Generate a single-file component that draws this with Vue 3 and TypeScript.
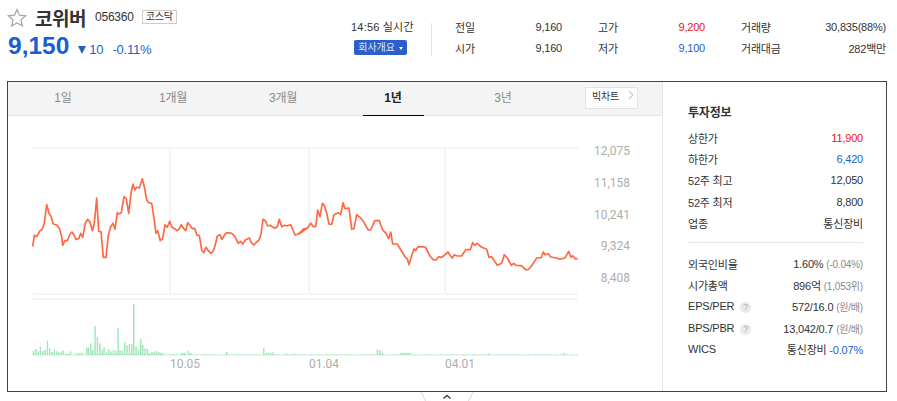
<template>
  <div class="page">
    <header class="summary">
      <div class="title-block">
        <div class="name-row">
          <svg class="star" width="20" height="19" viewBox="0 0 20 19">
            <path d="M10 1.5l2.5 5.6 6 .7-4.5 4.1 1.3 6L10 14.9 4.700 17.900l1.300-6L1.500 7.800l6-.7z" fill="#fff" stroke="#a9a9a9" stroke-width="1.300" />
          </svg>
          <strong class="name">코위버</strong>
          <span class="code">056360</span>
          <span class="market">코스닥</span>
        </div>
        <div class="price-row">
          <span class="price">9,150</span>
          <i class="down"></i>
          <span class="delta">10</span>
          <span class="rate">-0.11%</span>
        </div>
      </div>
      <div class="clock">
        <span class="time">14:56 실시간</span>
        <button class="company">회사개요 <i></i></button>
      </div>
      <div class="quote">
        <template v-for="q in quotes" :key="q.label">
          <div class="quote-cell">
            <span>{{ q.label }}</span>
            <span class="num" :class="q.tone">{{ q.value }}</span>
          </div>
        </template>
      </div>
    </header>

    <section class="frame">
      <div class="main">
        <nav class="tabs">
          <a v-for="t in tabs" :key="t" class="tab" :class="{ active: t === '1년' }">{{ t }}</a>
          <a class="big-chart">빅차트 <svg width="6" height="10" viewBox="0 0 6 10"><path d="M1 1l4 4-4 4" fill="none" stroke="#ccc" stroke-width="1.200" /></svg></a>
        </nav>
        <svg class="chart" width="654" height="275" viewBox="8 116 654 275">
          <g fill="none" stroke="#f5f5f5" stroke-width="2">
            <path d="M33 148H578M33 294H578M33 299H578" />
            <path d="M170 148V294M309 148V294M445 148V294" />
          </g>
          <path d="M32 355.500H578" stroke="#eef3f0" stroke-width="1" />
          <rect v-for="(b, i) in bars" :key="i" :x="b.x" :y="355 - b.h" width="1.500" :height="b.h" fill="#a5e6bd" />
          <polyline :points="line" fill="none" stroke="#ff6a45" stroke-width="1.700" stroke-linejoin="round" />
          <g class="axis" text-anchor="end">
            <text v-for="a in yLabels" :key="a.t" x="630" :y="a.y">{{ a.t }}</text>
          </g>
          <g class="axis" text-anchor="middle">
            <text x="185" y="368">10.05</text>
            <text x="324" y="368">01.04</text>
            <text x="460" y="368">04.01</text>
          </g>
        </svg>
      </div>
      <aside class="side">
        <h3>투자정보</h3>
        <dl>
          <div v-for="r in infoTop" :key="r.label" class="row">
            <dt>{{ r.label }}</dt>
            <dd :class="r.tone">{{ r.value }}</dd>
          </div>
        </dl>
        <hr />
        <dl>
          <div class="row"><dt>외국인비율</dt><dd>1.60% <small>(-0.04%)</small></dd></div>
          <div class="row"><dt>시가총액</dt><dd>896억 <small>(1,053위)</small></dd></div>
          <div class="row"><dt>EPS/PER <i class="help">?</i></dt><dd>572/16.0 <small>(원/배)</small></dd></div>
          <div class="row"><dt>BPS/PBR <i class="help">?</i></dt><dd>13,042/0.7 <small>(원/배)</small></dd></div>
          <div class="row"><dt>WICS</dt><dd>통신장비 <span class="blue">-0.07%</span></dd></div>
        </dl>
      </aside>
    </section>

    <svg class="fold" width="54" height="10" viewBox="0 0 54 10">
      <path d="M1 0l5 10M53 0l-5 10" stroke="#d4d4d4" fill="none" />
      <path d="M23.500 6.500L27 3.500l3.500 3" stroke="#444" stroke-width="1.600" fill="none" />
    </svg>
  </div>
</template>

<script setup lang="ts">
const tabs = ['1일', '1개월', '3개월', '1년', '3년']

const quotes = [
  { label: '전일', value: '9,160', tone: '' },
  { label: '고가', value: '9,200', tone: 'red' },
  { label: '거래량', value: '30,835(88%)', tone: '' },
  { label: '시가', value: '9,160', tone: '' },
  { label: '저가', value: '9,100', tone: 'blue' },
  { label: '거래대금', value: '282백만', tone: '' }
]

const infoTop = [
  { label: '상한가', value: '11,900', tone: 'red' },
  { label: '하한가', value: '6,420', tone: 'blue' },
  { label: '52주 최고', value: '12,050', tone: '' },
  { label: '52주 최저', value: '8,800', tone: '' },
  { label: '업종', value: '통신장비', tone: '' }
]

const yLabels = [
  { t: '12,075', y: 155 },
  { t: '11,158', y: 187 },
  { t: '10,241', y: 219 },
  { t: '9,324', y: 250 },
  { t: '8,408', y: 282 }
]

// traced from the reference, in 3x crop pixels
const left = [68,350,73,316,80,320,90,302,97,298,103,280,110,224,118,252,123,258,130,282,140,285,148,295,155,320,158,346,165,332,172,332,180,312,186,306,192,315,198,328,206,326,212,310,218,322,226,280,233,268,240,276,247,302,253,280,260,204,266,304,273,305,280,382,288,382,295,316,302,290,309,280,315,298,322,248,328,252,334,248,342,200,349,206,356,250,363,190,369,162,374,180,380,172,388,174,397,146,403,170,410,210,416,218,425,220,432,265,438,310,443,302,451,332,458,326,465,284,472,292,479,274,486,292,494,296,500,302,507,298,514,284,521,296,527,302,533,278,540,286,547,296,554,295,561,316,568,316,575,360,581,368,588,352,595,362,602,370,608,366,615,348,622,318,630,314,636,328,644,314,650,308,665,310,672,316,679,328,685,340,692,334,698,342,706,330,718,324,724,338,732,345,740,336,747,330,753,312,759,268,766,272,773,288,780,286,787,290,795,295,802,290,808,268,815,290,823,286,830,288,836,286,842,284,849,300,855,315,865,312,872,306,880,297,892,294]
const right = [0,310,10,298,22,295,32,280,40,290,47,290,53,240,60,260,67,220,73,226,80,250,87,282,95,283,102,254,115,248,122,254,129,218,135,236,147,234,155,298,162,296,170,254,180,262,190,274,205,300,212,300,224,272,238,272,247,298,258,310,266,326,272,306,278,342,292,342,305,364,316,382,322,386,327,404,334,380,342,356,347,362,354,350,376,351,390,378,400,389,408,390,416,380,425,382,437,372,444,366,450,376,457,384,463,374,472,378,485,378,497,359,511,359,518,338,524,346,532,340,545,352,560,358,567,382,575,380,592,406,605,400,613,374,622,384,634,406,641,400,648,406,664,407,678,420,686,418,696,406,710,384,724,383,730,366,735,374,745,371,752,381,770,384,780,388,795,384,806,364,813,382,818,377,826,387,833,386]

const toPoints = (src: number[], ox: number): string[] => {
  const out: string[] = []
  for (let i = 0; i < src.length; i += 2) {
    out.push(`${(ox + src[i] / 3).toFixed(1)},${(130 + src[i + 1] / 3).toFixed(1)}`)
  }
  return out
}
const line = [...toPoints(left, 10), ...toPoints(right, 300)].join(' ')

// volume: [crop x, crop y of the bar top] for the taller bars
const tall: [number, number][] = [[68,182],[75,177],[82,182],[89,170],[96,183],[103,180],[110,152],[117,175],[124,186],[131,178],[138,184],[145,186],[152,185],[158,181],[165,192],[172,191],[179,184],[200,190],[207,190],[214,188],[228,173],[233,172],[240,160],[246,180],[253,108],[260,140],[267,160],[274,180],[280,172],[287,186],[294,178],[301,184],[308,180],[315,182],[322,113],[328,180],[335,182],[342,156],[349,165],[356,162],[363,162],[369,42],[376,170],[383,178],[390,146],[396,165],[403,175],[410,177],[417,190],[424,186],[431,184],[438,184],[445,186],[452,188],[515,188],[522,188],[533,182],[540,189],[648,186],[759,174],[766,189],[773,188],[780,188],[787,187],[827,190],[850,190],[1100,178],[1107,180],[1114,188],[1170,189],[1177,188],[1184,188],[1191,188],[1198,189],[1435,190],[1660,189]]
const bars: { x: number; h: number }[] = []
for (let x = 33; x < 578; x += 2.3) {
  const seed = Math.round(x * 7) % 5
  bars.push({ x, h: seed === 0 ? 0.5 : x < 190 ? 1.2 : 0.8 })
}
for (const [cx, top] of tall) {
  bars.push({ x: 10 + cx / 3, h: (195 - top) / 3 })
}
</script>

<style>
html, body {
  margin: 0;
  background: #fff;
  overflow: hidden;
}
</style>

<style scoped>
.page {
  position: relative;
  width: 897px;
  height: 401px;
  font-family: "Liberation Sans", "Noto Sans CJK KR", sans-serif;
  font-size: 11px;
  letter-spacing: -0.2px;
  color: #333;
}

.summary {
  display: flex;
  height: 81px;
  box-sizing: border-box;
}

.title-block {
  width: 344px;
  padding: 7px 0 0 7px;
  box-sizing: border-box;
}

.name-row {
  display: flex;
  align-items: center;
  height: 20px;
}

.star {
  margin-right: 8px;
}

.name {
  font-size: 19px;
  color: #333;
  letter-spacing: -0.5px;
  margin-right: 9px;
}

.code {
  font-size: 12px;
  margin-right: 8px;
}

.market {
  border: 1px solid #ccc;
  font-size: 10px;
  line-height: 12px;
  padding: 0 3px;
  color: #333;
}

.price-row {
  display: flex;
  align-items: baseline;
  margin-top: 5px;
  padding-left: 1px;
  color: #1a5fd0;
}

.price {
  font-size: 24.500px;
  font-weight: 700;
  letter-spacing: 0;
  margin-right: 9px;
}

.down {
  width: 0;
  height: 0;
  border: 4.500px solid transparent;
  border-top: 8px solid #2a5fae;
  border-bottom: 0;
  margin-right: 3px;
}

.delta,
.rate {
  font-size: 13px;
}

.rate {
  margin-left: 9px;
}

.clock {
  width: 80px;
  height: 33px;
  margin: 23px 0 0 7px;
  border-right: 1px solid #e5e5e5;
  display: flex;
  flex-direction: column;
}

.time {
  font-size: 11px;
  line-height: 10px;
  margin-top: -1px;
  letter-spacing: 0.2px;
  white-space: nowrap;
}

.company {
  width: 53px;
  height: 15px;
  margin: 8px 0 0 3px;
  padding: 0;
  border: 0;
  border-radius: 2px;
  background: #2b5fc9;
  color: #dfe8fa;
  font: inherit;
  font-size: 10px;
  line-height: 15px;
}

.company i {
  display: inline-block;
  vertical-align: middle;
  border: 2.500px solid transparent;
  border-top: 3px solid #fff;
  border-bottom: 0;
  margin-left: 1px;
}

.quote {
  display: grid;
  grid-template-columns: 107px 107px 145px;
  grid-auto-rows: 21.500px;
  column-gap: 36px;
  margin: 16px 0 0 23px;
  height: 43px;
}

.quote-cell {
  display: flex;
  justify-content: space-between;
  align-items: center;
}

.num {
  font-size: 11px;
}

.red {
  color: #f01010;
}

.blue {
  color: #1a5fd0;
}

.frame {
  display: flex;
  width: 880px;
  height: 311px;
  margin-left: 7px;
  box-sizing: border-box;
  border: 1px solid #444;
}

.main {
  width: 654px;
  display: flex;
  flex-direction: column;
}

.tabs {
  display: flex;
  position: relative;
  height: 34px;
  box-sizing: border-box;
  background: #f4f4f4;
  border-bottom: 1px solid #e5e5e5;
}

.tab {
  width: 110px;
  height: 34px;
  box-sizing: border-box;
  text-align: center;
  line-height: 32px;
  font-size: 12px;
  color: #8a8a8a;
}

.tab.active {
  color: #222;
  font-weight: 700;
  position: relative;
}

.tab.active::after {
  content: "";
  position: absolute;
  left: 25px;
  width: 61px;
  bottom: 0;
  height: 1px;
  background: #000;
}

.big-chart {
  position: absolute;
  left: 577px;
  top: 5px;
  width: 53px;
  height: 22px;
  box-sizing: border-box;
  border: 1px solid #e3e3e3;
  background: #fff;
  font-size: 10px;
  line-height: 18px;
  padding-left: 6px;
  color: #333;
  white-space: nowrap;
}

.big-chart svg {
  margin-left: 6px;
}

.chart {
  display: block;
  flex: none;
}

.axis text {
  font-family: Roboto, "Liberation Sans", sans-serif;
  font-size: 12px;
  letter-spacing: 0;
  fill: #adadad;
}

.side {
  flex: 1;
  border-left: 1px solid #e5e5e5;
  padding: 23px 23px 0 25px;
}

.side h3 {
  margin: 0 0 6px;
  font-size: 12px;
  line-height: 16px;
  color: #333;
}

.side dl {
  margin: 0;
}

.row {
  display: flex;
  justify-content: space-between;
  align-items: center;
  height: 21.300px;
  white-space: nowrap;
}

.row dd {
  margin: 0;
}

.row small {
  font-size: 10px;
  color: #8a8a8a;
}

.help {
  display: inline-block;
  width: 11px;
  height: 11px;
  margin-left: 3px;
  border-radius: 50%;
  background: #eaeaea;
  color: #aaa;
  font-size: 9px;
  font-style: normal;
  line-height: 11px;
  text-align: center;
}

.side hr {
  border: 0;
  border-top: 1px solid #e5e5e5;
  margin: 9px 0 10px;
}

.fold {
  position: absolute;
  left: 420px;
  top: 392px;
}
</style>
